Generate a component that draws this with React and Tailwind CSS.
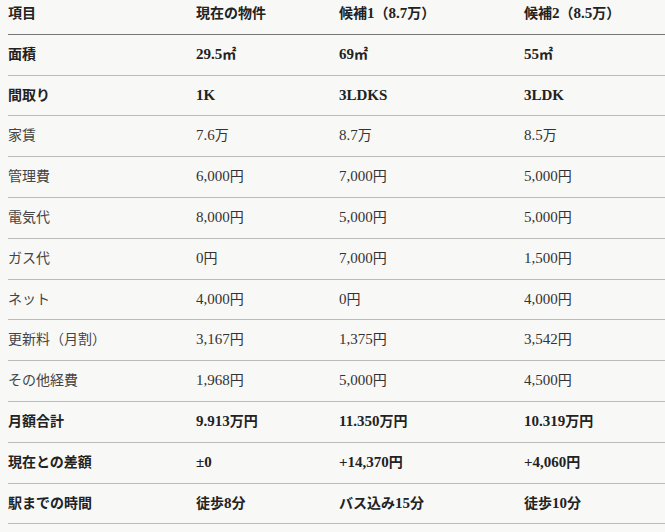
const header = ['項目', '現在の物件', '候補1（8.7万）', '候補2（8.5万）'];

const rows = [
  { label: '面積', values: ['29.5㎡', '69㎡', '55㎡'], bold: true },
  { label: '間取り', values: ['1K', '3LDKS', '3LDK'], bold: true },
  { label: '家賃', values: ['7.6万', '8.7万', '8.5万'] },
  { label: '管理費', values: ['6,000円', '7,000円', '5,000円'] },
  { label: '電気代', values: ['8,000円', '5,000円', '5,000円'] },
  { label: 'ガス代', values: ['0円', '7,000円', '1,500円'] },
  { label: 'ネット', values: ['4,000円', '0円', '4,000円'] },
  { label: '更新料（月割）', values: ['3,167円', '1,375円', '3,542円'] },
  { label: 'その他経費', values: ['1,968円', '5,000円', '4,500円'] },
  { label: '月額合計', values: ['9.913万円', '11.350万円', '10.319万円'], bold: true },
  { label: '現在との差額', values: ['±0', '+14,370円', '+4,060円'], bold: true },
  { label: '駅までの時間', values: ['徒歩8分', 'バス込み15分', '徒歩10分'], bold: true },
];

const colWidths = ['w-[188px]', 'w-[143px]', 'w-[185px]', 'w-[150px]'];

// latin runs render a touch larger than the CJK glyphs in the original
function Mixed({ text }) {
  const parts = text.split(/([0-9A-Za-z.,+±]+)/);
  return parts.map((p, i) =>
    /^[0-9A-Za-z.,+±]+$/.test(p) ? (
      <span key={i} className="text-[15px] leading-none">
        {p}
      </span>
    ) : (
      p
    )
  );
}

export default function App() {
  return (
    <div className="w-[665px] h-[532px] overflow-hidden bg-[#f8f8f6] pl-2 font-['Liberation_Serif','Noto_Sans_CJK_JP',serif] text-[14px] leading-[1.7] text-[#333]">
      <table className="table-fixed border-collapse w-[666px]">
        <colgroup>
          {colWidths.map((w, i) => (
            <col key={i} className={w} />
          ))}
        </colgroup>
        <thead>
          <tr className="border-b border-[#777]">
            {header.map((h) => (
              <th key={h} className="pt-[2px] pb-2 text-left font-bold text-[#222] whitespace-nowrap">
                <Mixed text={h} />
              </th>
            ))}
          </tr>
        </thead>
        <tbody>
          {rows.map((r) => (
            <tr key={r.label} className="border-b border-[#bbb]">
              <td className={`py-2 whitespace-nowrap ${r.bold ? 'font-bold text-[#222]' : 'text-[#444]'}`}>
                {r.label}
              </td>
              {r.values.map((v, i) => (
                <td key={i} className={`py-2 whitespace-nowrap ${r.bold ? 'font-bold text-[#222]' : 'text-[#333]'}`}>
                  <Mixed text={v} />
                </td>
              ))}
            </tr>
          ))}
        </tbody>
      </table>
    </div>
  );
}
